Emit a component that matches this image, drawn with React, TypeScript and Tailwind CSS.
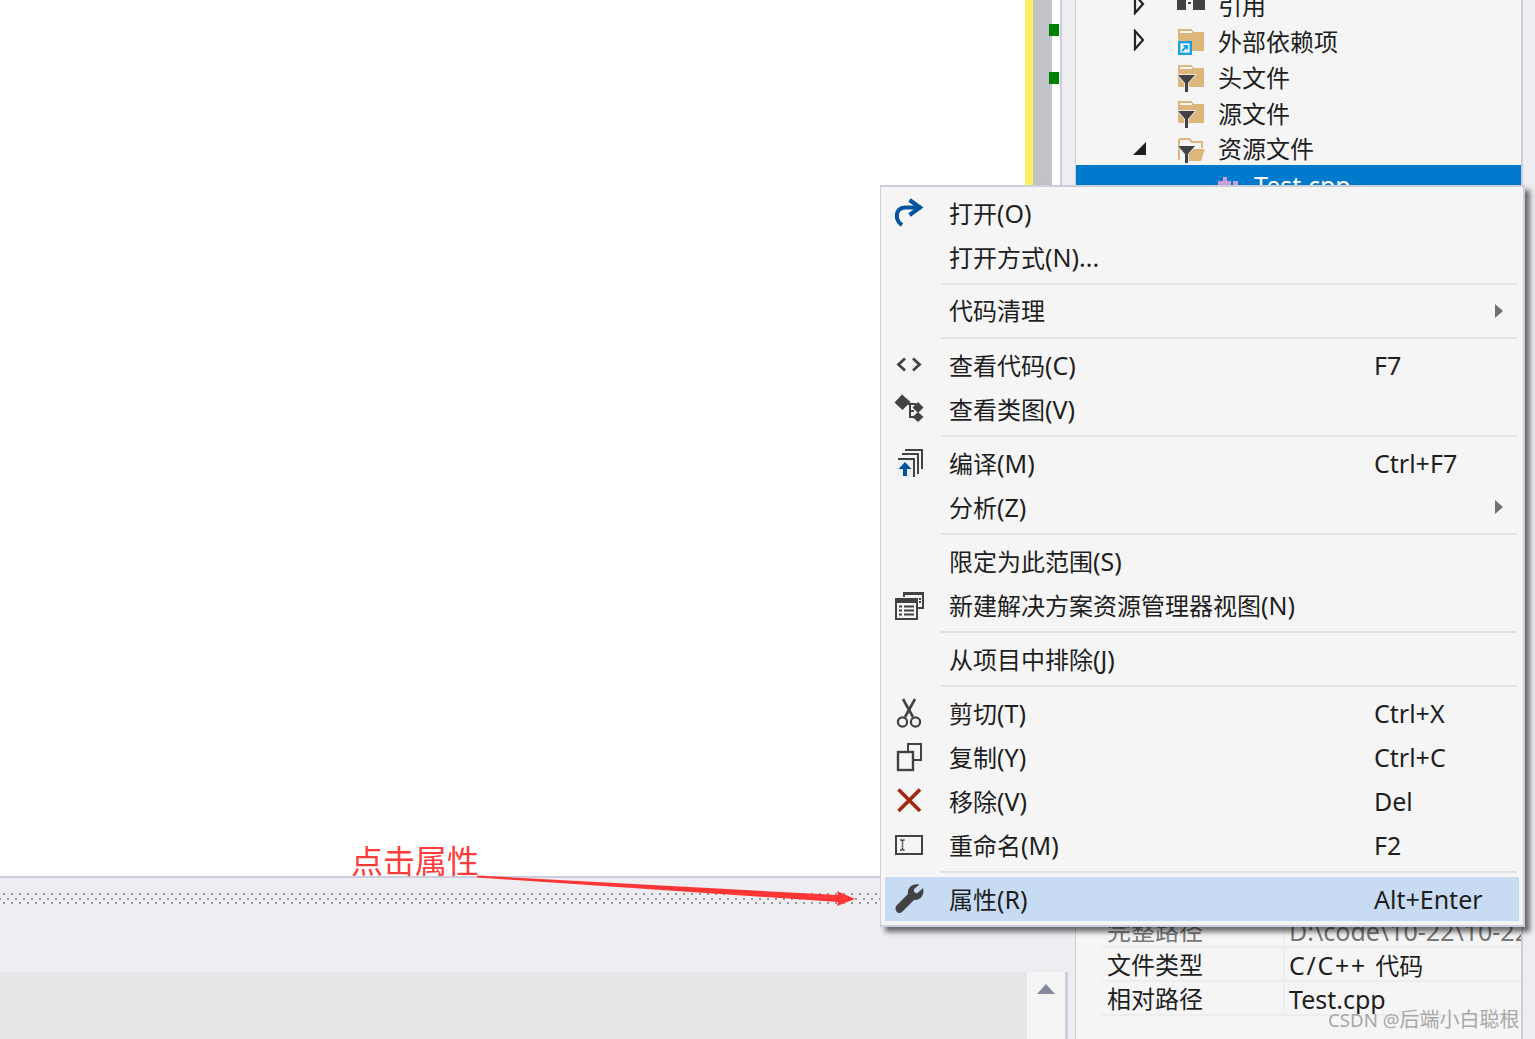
import React from "react";

const FONT = "font-['Noto_Sans','Noto_Sans_CJK_SC',sans-serif]";

function Txt({ text, latin = "" }: { text: string; latin?: string }) {
  const parts = text.split(/([\x00-\x7f]+)/);
  return (
    <>
      {parts.map((p, i) =>
        i % 2 === 1 ? (
          <span key={i} className={`text-[25px] ${latin}`}>
            {p}
          </span>
        ) : (
          <span key={i}>{p}</span>
        )
      )}
    </>
  );
}

function ArrowOpen() {
  return (
    <svg width="30" height="30" viewBox="0 0 30 30" fill="none">
      <path d="M8 27 C0.5 22 1 10 11 9.5 H27" stroke="#00539c" strokeWidth="4" />
      <path d="M15.5 2 L26 9.5 L15.5 17" stroke="#00539c" strokeWidth="4" />
    </svg>
  );
}
function CodeIcon() {
  return (
    <svg width="30" height="30" viewBox="0 0 30 30" fill="none" stroke="#424242" strokeWidth="2.8">
      <path d="M11 8.5 L4.5 14.5 L11 20.5" />
      <path d="M19 8.5 L25.5 14.5 L19 20.5" />
    </svg>
  );
}
function ClassIcon() {
  return (
    <svg width="30" height="30" viewBox="0 0 30 30">
      <path d="M8 0.5 L16.5 8 L8.5 16 L0.5 8.5 Z" fill="#424242" />
      <path d="M14 10 H22 M16 10 V23 H22 M16 17 H20" stroke="#424242" strokeWidth="2" fill="none" />
      <path d="M24 8 L29.5 13.5 L24 19 L18.5 13.5 Z" fill="#424242" />
      <path d="M24 18 L29.5 23 L24 28 L18.5 23 Z" fill="#424242" />
    </svg>
  );
}
function BuildIcon() {
  return (
    <svg width="30" height="30" viewBox="0 0 30 30" fill="none">
      <path d="M11 2 H28 V21" stroke="#424242" strokeWidth="2" />
      <path d="M8 6 H24 V26" stroke="#424242" strokeWidth="2" />
      <path d="M4 11 H20 V29" stroke="#424242" strokeWidth="2" />
      <rect x="3" y="12" width="16" height="17" fill="#efeff0" />
      <path d="M11 14 L17.5 21 H13 V28 H9 V21 H4.5 Z" fill="#00539c" />
    </svg>
  );
}
function NewViewIcon() {
  return (
    <svg width="30" height="30" viewBox="0 0 30 30" fill="none">
      <path d="M10 7 V3 H29 V18 H24" stroke="#424242" strokeWidth="2" />
      <path d="M10 3.5 H29" stroke="#424242" strokeWidth="3" />
      <path d="M26 8 V14" stroke="#424242" strokeWidth="2" strokeDasharray="2 1" />
      <rect x="2" y="9" width="21" height="20" stroke="#424242" strokeWidth="2" />
      <path d="M2 11 H23" stroke="#424242" strokeWidth="4" />
      <path d="M5 16.5 H8 M10 16.5 H20 M5 20.5 H8 M10 20.5 H20 M5 24.5 H8 M10 24.5 H20" stroke="#424242" strokeWidth="2" />
    </svg>
  );
}
function CutIcon() {
  return (
    <svg width="30" height="30" viewBox="0 0 30 30" fill="none" stroke="#424242">
      <path d="M9 1 L19 19" strokeWidth="2.6" />
      <path d="M21 1 L11 19" strokeWidth="2.6" />
      <circle cx="8.5" cy="24" r="4.6" strokeWidth="2.2" />
      <circle cx="21.5" cy="24" r="4.6" strokeWidth="2.2" />
    </svg>
  );
}
function CopyIcon() {
  return (
    <svg width="30" height="30" viewBox="0 0 30 30" fill="none" stroke="#424242" strokeWidth="2">
      <path d="M14 10 V2 H27 V18 H20" />
      <rect x="4" y="10" width="15" height="18" fill="#f5f5f5" strokeWidth="2.4" />
    </svg>
  );
}
function RemoveIcon() {
  return (
    <svg width="30" height="30" viewBox="0 0 30 30" stroke="#a1260d" strokeWidth="3.6">
      <path d="M4.5 3.5 L26 25 M26 3.5 L4.5 25" />
    </svg>
  );
}
function RenameIcon() {
  return (
    <svg width="30" height="30" viewBox="0 0 30 30" fill="none">
      <rect x="2" y="6" width="26" height="18" stroke="#424242" strokeWidth="2" />
      <path d="M6 10 H11 M6 20 H11 M8.5 10 V20" stroke="#424242" strokeWidth="1.6" strokeDasharray="2 0.6" />
    </svg>
  );
}
function WrenchIcon() {
  return (
    <svg width="30" height="30" viewBox="0 0 30 30">
      <path
        d="M29 4 L23 9.5 L20 8 L20 5 L25.5 0.5 C19 -1 13 3 14 10 L3 21 C0 24 2 29 5.5 29 C7 29 8 28 9 27 L20 16 C26 17 31 11 29 4 Z"
        fill="#424242"
      />
    </svg>
  );
}

function Row({
  icon,
  label,
  shortcut,
  sub,
  active,
}: {
  icon?: React.ReactNode;
  label: string;
  shortcut?: string;
  sub?: boolean;
  active?: boolean;
}) {
  return (
    <div className={`h-[44px] flex items-center ${active ? "bg-[#c7dcf3]" : ""}`}>
      <div className="w-[64px] pl-[9px] flex items-center shrink-0">{icon}</div>
      <div className="w-[425px] shrink-0 text-[24px] leading-[30px] text-[#1e1e1e] whitespace-nowrap">
        <Txt text={label} />
      </div>
      <div className="flex-1 text-[25px] leading-[30px] text-[#1e1e1e] whitespace-nowrap">{shortcut}</div>
      {sub && <div className="w-0 h-0 mr-[16px] border-y-[7px] border-y-transparent border-l-[8px] border-l-[#717171]" />}
    </div>
  );
}

function Sep() {
  return (
    <div className="h-[10px] flex items-center pl-[56px] pr-[2px]">
      <div className="h-[2px] w-full bg-[#e0e3e6]" />
    </div>
  );
}

function FolderIcon({ overlay }: { overlay: "link" | "filter" | "filterOpen" }) {
  return (
    <svg width="30" height="30" viewBox="0 0 30 30">
      {overlay === "filterOpen" ? (
        <>
          <path d="M2 5 H12 L15 8 H25 V14 M2 5 V26" stroke="#dcb67a" strokeWidth="2" fill="none" />
          <path d="M8 27 L13 15 H28 L24 27 Z" fill="#dcb67a" />
        </>
      ) : (
        <>
          <path d="M1 2 H14 L17 5 H27 V24 H1 Z" fill="#dcb67a" />
          <path d="M3 4 H15 V6 H3 Z" fill="#f5f5f5" />
        </>
      )}
      {overlay === "link" ? (
        <>
          <rect x="2.2" y="15.2" width="11.6" height="11.6" fill="#f5f5f5" stroke="#1ba1e2" strokeWidth="2.4" />
          <path d="M5 24 L10 19 M6.5 18.8 H10.2 V22.5" stroke="#1ba1e2" strokeWidth="1.8" fill="none" />
        </>
      ) : (
        <path
          d="M1 12 H18 L11 20 V29 H8 V20 Z"
          fill="#424242"
          stroke="#f5f5f5"
          strokeWidth="1.4"
          paintOrder="stroke"
        />
      )}
    </svg>
  );
}

function TreeRow({
  arrow,
  icon,
  label,
  h = "h-[36px]",
}: {
  arrow?: "closed" | "open";
  icon: React.ReactNode;
  label: string;
  h?: string;
}) {
  return (
    <div className={`${h} flex items-center shrink-0`}>
      <div className="w-[101px] pl-[57px] flex items-center shrink-0">
        {arrow === "closed" && (
          <svg width="12" height="22" viewBox="0 0 12 22" fill="none" className="-translate-y-[2px]">
            <path d="M2 2 L10 11 L2 20 Z" stroke="#222" strokeWidth="2.2" />
          </svg>
        )}
        {arrow === "open" && (
          <svg width="14" height="14" viewBox="0 0 14 14" className="-translate-y-[1px]">
            <path d="M13 1 V14 H0 Z" fill="#1e1e1e" />
          </svg>
        )}
      </div>
      <div className="w-[41px] shrink-0 flex items-center">{icon}</div>
      <div className="text-[24px] leading-none text-[#1e1e1e] whitespace-nowrap">{label}</div>
    </div>
  );
}

function PropRow({ name, value, faded, latin }: { name: string; value: string; faded?: boolean; latin?: string }) {
  const c = faded ? "text-[#777777]" : "text-[#1e1e1e]";
  return (
    <div className="h-[34px] flex border-b-2 border-[#ededed] overflow-hidden">
      <div className={`w-[184px] shrink-0 pl-[6px] border-r-2 border-[#ededed] text-[24px] leading-[34px] whitespace-nowrap ${c}`}>{name}</div>
      <div className={`flex-1 pl-[4px] text-[24px] leading-[34px] whitespace-nowrap overflow-hidden ${c}`}>
        <Txt text={value} latin={latin} />
      </div>
    </div>
  );
}

function DotRow({ offset, mt }: { offset: string; mt: string }) {
  return (
    <div
      className={`h-[2px] w-full bg-[linear-gradient(90deg,#98989c_2px,transparent_2px)] bg-[length:8px_2px] ${offset} ${mt}`}
    />
  );
}

export default function App() {
  return (
    <div className={`relative w-[1535px] h-[1039px] overflow-hidden flex bg-[#eeeef2] ${FONT}`}>
      {/* left region */}
      <div className="w-[1075px] h-full flex flex-col shrink-0">
        <div className="h-[876px] flex shrink-0">
          <div className="w-[1025px] bg-white" />
          <div className="w-[8px] bg-[#ffee62]" />
          <div className="w-[19px] bg-[#c2c3c9]" />
          <div className="w-[8px] bg-white relative">
            <div className="absolute left-[-3px] top-[24px] w-[10px] h-[12px] bg-[#008000]" />
            <div className="absolute left-[-3px] top-[72px] w-[10px] h-[12px] bg-[#008000]" />
          </div>
          <div className="w-[2px] bg-[#cccedb]" />
          <div className="flex-1" />
        </div>
        <div className="h-[96px] shrink-0 border-t-2 border-[#cccedb] pt-[15px] pr-[10px]">
          <DotRow offset="bg-[position:3px_0]" mt="" />
          <DotRow offset="bg-[position:7px_0]" mt="mt-[2.5px]" />
          <DotRow offset="bg-[position:3px_0]" mt="mt-[2.5px]" />
        </div>
        <div className="flex-1 flex">
          <div className="w-[1027px] bg-[#e6e7e9]" />
          <div className="w-[38px] bg-[#f5f5f5] flex justify-center pt-[12px]">
            <div className="w-0 h-0 border-x-[9px] border-x-transparent border-b-[10px] border-b-[#868999]" />
          </div>
          <div className="w-[3px] bg-[#cccedb]" />
          <div className="flex-1" />
        </div>
      </div>

      {/* solution explorer + properties */}
      <div className="w-[448px] h-full border-x-2 border-[#cccedb] border-l-[1px] bg-[#f5f5f5] flex flex-col justify-between shrink-0">
        <div className="flex flex-col mt-[-12px]">
          <TreeRow
            arrow="closed"
            label="引用"
            icon={
              <div className="flex items-center -translate-y-[3px]">
                <div className="w-[9px] h-[14px] bg-[#424242]" />
                <div className="w-[3px] h-[2px] bg-[#424242] mx-[2px]" />
                <div className="w-[12px] h-[14px] bg-[#424242]" />
              </div>
            }
          />
          <TreeRow arrow="closed" label="外部依赖项" icon={<FolderIcon overlay="link" />} />
          <TreeRow label="头文件" icon={<FolderIcon overlay="filter" />} />
          <TreeRow label="源文件" icon={<FolderIcon overlay="filter" />} />
          <TreeRow arrow="open" label="资源文件" h="h-[33px]" icon={<FolderIcon overlay="filterOpen" />} />
          <div className="h-[40px] bg-[#007acc] flex items-center pl-[139px]">
            <svg width="24" height="24" viewBox="0 0 24 24" className="mr-[15px]">
              <path d="M3 8 H8 V4 H12 V8 H16 V13 H3 Z" fill="#c9a0dc" />
              <rect x="18" y="8" width="5" height="5" fill="#c9a0dc" />
            </svg>
            <span className="text-[25px] leading-none text-white whitespace-nowrap">Test.cpp</span>
          </div>
        </div>
        <div className="pl-[25px] pb-[23px]">
          <PropRow name="完整路径" value="D:\code\10-22\10-22\Test.cpp" faded />
          <PropRow name="文件类型" value="C/C++ 代码" latin="tracking-[1.7px]" />
          <PropRow name="相对路径" value="Test.cpp" />
        </div>
      </div>
      <div className="flex-1" />

      {/* context menu */}
      <div className="absolute left-[880px] top-[185px] w-[645px] h-[742px] bg-[#f5f5f5] border-2 border-l-[1px] border-[#cccedb] pt-[4px] pl-[4px] pr-[4px] pb-[4px] shadow-[5px_5px_5px_rgba(0,0,0,0.55)]">
        <Row icon={<ArrowOpen />} label="打开(O)" />
        <Row label="打开方式(N)..." />
        <Sep />
        <Row label="代码清理" sub />
        <Sep />
        <Row icon={<CodeIcon />} label="查看代码(C)" shortcut="F7" />
        <Row icon={<ClassIcon />} label="查看类图(V)" />
        <Sep />
        <Row icon={<BuildIcon />} label="编译(M)" shortcut="Ctrl+F7" />
        <Row label="分析(Z)" sub />
        <Sep />
        <Row label="限定为此范围(S)" />
        <Row icon={<NewViewIcon />} label="新建解决方案资源管理器视图(N)" />
        <Sep />
        <Row label="从项目中排除(J)" />
        <Sep />
        <Row icon={<CutIcon />} label="剪切(T)" shortcut="Ctrl+X" />
        <Row icon={<CopyIcon />} label="复制(Y)" shortcut="Ctrl+C" />
        <Row icon={<RemoveIcon />} label="移除(V)" shortcut="Del" />
        <Row icon={<RenameIcon />} label="重命名(M)" shortcut="F2" />
        <Sep />
        <Row icon={<WrenchIcon />} label="属性(R)" shortcut="Alt+Enter" active />
      </div>

      {/* annotation */}
      <div className="absolute left-[351px] top-[842px] text-[32px] leading-[38px] text-[#ff3b3b] whitespace-nowrap">点击属性</div>
      <svg className="absolute left-[470px] top-[870px]" width="395" height="40" viewBox="0 0 395 40">
        <path d="M7 5.5 L7 7.5 L368 32 L367 36 L385 29 L367 21 L368 25 Z" fill="#ff3636" />
      </svg>

      {/* watermark */}
      <div className="absolute left-[1328px] top-[1007px] text-[20px] leading-[26px] text-[#a8a8a8] whitespace-nowrap">
        <span className="text-[18.7px]">CSDN @</span>后端小白聪根
      </div>
    </div>
  );
}
